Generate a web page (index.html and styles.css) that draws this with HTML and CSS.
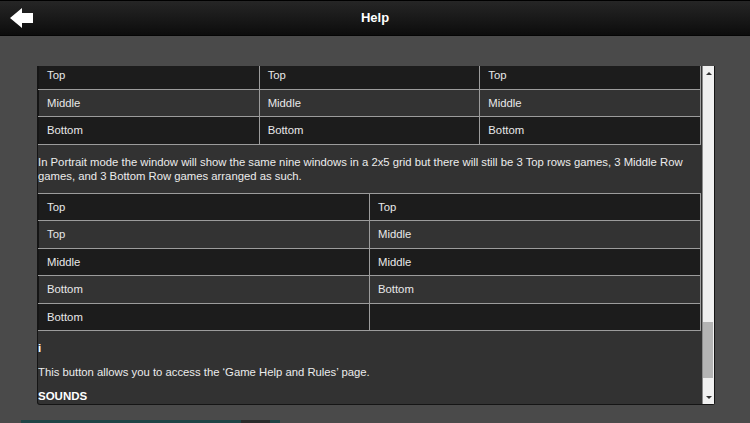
FILE: index.html
```html
<!DOCTYPE html>
<html lang="en">
<head>
  <meta charset="UTF-8">
  <title>Help</title>
  <link rel="stylesheet" href="styles.css">
</head>
<body>
  <header class="topbar">
    <a class="back" href="#">
      <svg width="24" height="20" viewBox="0 0 24 20"><path d="M0 10 L12 0 V5 H23 V15 H12 V20 Z" fill="#fff"/></svg>
    </a>
    <h1>Help</h1>
    <span></span>
  </header>

  <div class="panel">
    <div class="viewport">
      <div class="content">
        <table class="grid cut">
          <tr><td>Top</td><td>Top</td><td>Top</td></tr>
          <tr><td>Middle</td><td>Middle</td><td>Middle</td></tr>
          <tr><td>Bottom</td><td>Bottom</td><td>Bottom</td></tr>
        </table>

        <p>In Portrait mode the window will show the same nine windows in a 2x5 grid but there will still be 3 Top rows games, 3 Middle Row games, and 3 Bottom Row games arranged as such.</p>

        <table class="grid">
          <tr><td>Top</td><td>Top</td></tr>
          <tr><td>Top</td><td>Middle</td></tr>
          <tr><td>Middle</td><td>Middle</td></tr>
          <tr><td>Bottom</td><td>Bottom</td></tr>
          <tr><td>Bottom</td><td></td></tr>
        </table>

        <h3>i</h3>
        <p>This button allows you to access the ‘Game Help and Rules’ page.</p>
        <h3>SOUNDS</h3>
      </div>
    </div>
    <div class="scrollbar">
      <span class="arrow up"></span>
      <div class="track"><div class="thumb"></div></div>
      <span class="arrow down"></span>
    </div>
  </div>

  <div class="footer"><span></span></div>
</body>
</html>
```

FILE: styles.css
```css
body {
  margin: 0;
  background: #4a4a4a;
  font-family: "Liberation Sans", Arial, sans-serif;
  font-size: 11.3px;
  color: #ececec;
  height: 423px;
  overflow: hidden;
}

.topbar {
  display: grid;
  grid-template-columns: 1fr auto 1fr;
  align-items: center;
  height: 36px;
  padding: 0 10px 2px;
  background: linear-gradient(to bottom, #262626, #0c0c0c);
  border-top: 1px solid #000;
  border-bottom: 1px solid #050505;
  box-sizing: border-box;
}

.back {
  display: flex;
  padding-top: 2px;
}

.topbar h1 {
  margin: 0;
  font-size: 13px;
  font-weight: bold;
  color: #fff;
}

.panel {
  display: flex;
  height: 339px;
  margin: 30px 35px 0 37px;
  background: #323232;
  border: 1px solid #151515;
  border-top: none;
  border-radius: 0 0 3px 3px;
  box-sizing: border-box;
}

.viewport {
  flex: 1;
  overflow: hidden;
}

.content {
  padding-right: 1px;
}

.grid {
  width: 100%;
  border-collapse: collapse;
  table-layout: fixed;
  margin: 10px 0;
}

.grid.cut {
  margin-top: -5px;
}

.grid td {
  border: 1px solid #9c9c9c;
  padding: 6px 8px;
  line-height: 14.5px;
  height: 14.5px;
  color: #e8e8e8;
}

.grid tr:nth-child(odd) td {
  background: #1c1c1c;
}

.grid tr:nth-child(even) td {
  background: #333;
}

.grid tr td:first-child {
  border-left-color: #151515;
}

.content p {
  margin: 10px 0;
  line-height: 14px;
}

.content h3 {
  margin: 10px 0;
  font-size: 11.5px;
  line-height: 14px;
  font-weight: bold;
  color: #fff;
}

.scrollbar {
  display: flex;
  flex-direction: column;
  width: 11px;
  background: #f0f0f0;
  border-left: 1px solid #8a8a8a;
}

.arrow {
  height: 14px;
  display: flex;
  justify-content: center;
  align-items: center;
}

.arrow::after {
  content: "";
  border-left: 3px solid transparent;
  border-right: 3px solid transparent;
}

.arrow.up::after {
  border-bottom: 3px solid #333;
}

.arrow.down::after {
  border-top: 3px solid #333;
}

.track {
  flex: 1;
}

.thumb {
  margin: 242px 1px 0 0;
  height: 56px;
  background: #b4b4b4;
}

.footer {
  margin: 15px 0 0 21px;
}

.footer span {
  display: block;
  width: 259px;
  height: 4px;
  background: linear-gradient(to right, #1f4446 85%, #2a2a2a 85%, #2a2a2a 96%, #1f4446 96%);
}
```
